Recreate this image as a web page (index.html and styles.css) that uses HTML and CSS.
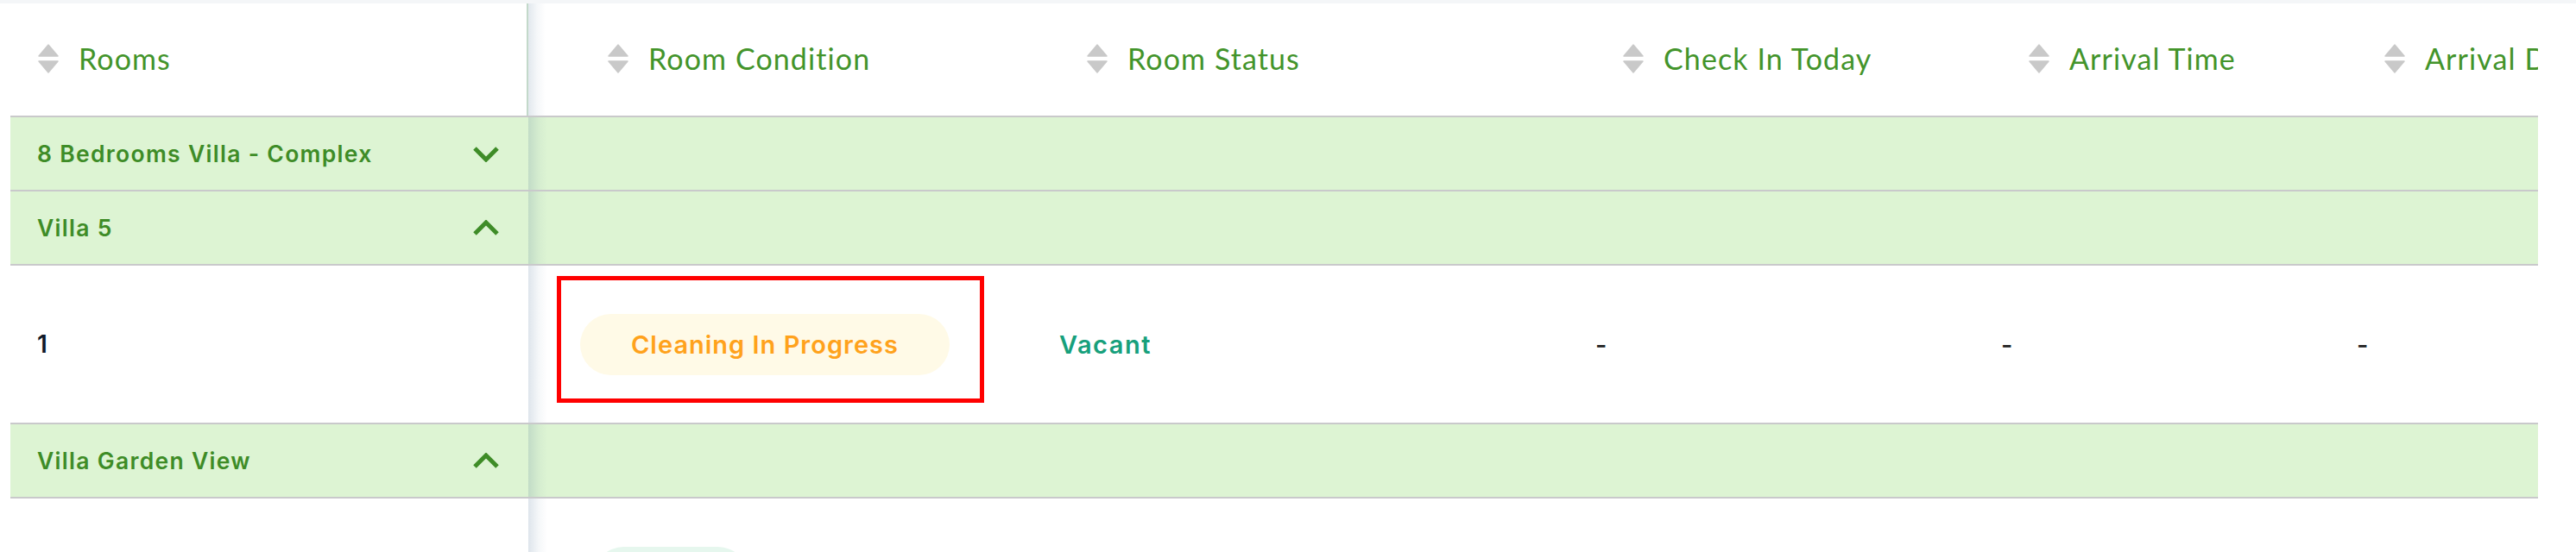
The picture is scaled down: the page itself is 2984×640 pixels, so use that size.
FILE: index.html
```html
<!DOCTYPE html>
<html lang="en">
<head>
<meta charset="utf-8">
<title>Rooms</title>
<link rel="stylesheet" href="styles.css">
</head>
<body>
<div class="topbar"></div>
<div class="table-wrap">
  <div class="table">
    <div class="row head">
      <div class="cell sticky th th-first">
        <svg class="sort" viewBox="0 0 24 34"><path d="M12 1 L23 14 L1 14 Z"/><path d="M1 20 L23 20 L12 33 Z"/></svg>
        <span>Rooms</span>
      </div>
      <div class="cell th th-cond">
        <svg class="sort" viewBox="0 0 24 34"><path d="M12 1 L23 14 L1 14 Z"/><path d="M1 20 L23 20 L12 33 Z"/></svg>
        <span>Room Condition</span>
      </div>
      <div class="cell th">
        <svg class="sort" viewBox="0 0 24 34"><path d="M12 1 L23 14 L1 14 Z"/><path d="M1 20 L23 20 L12 33 Z"/></svg>
        <span>Room Status</span>
      </div>
      <div class="cell th">
        <svg class="sort" viewBox="0 0 24 34"><path d="M12 1 L23 14 L1 14 Z"/><path d="M1 20 L23 20 L12 33 Z"/></svg>
        <span>Check In Today</span>
      </div>
      <div class="cell th">
        <svg class="sort" viewBox="0 0 24 34"><path d="M12 1 L23 14 L1 14 Z"/><path d="M1 20 L23 20 L12 33 Z"/></svg>
        <span>Arrival Time</span>
      </div>
      <div class="cell th">
        <svg class="sort" viewBox="0 0 24 34"><path d="M12 1 L23 14 L1 14 Z"/><path d="M1 20 L23 20 L12 33 Z"/></svg>
        <span>Arrival Date</span>
      </div>
    </div>

    <div class="row group">
      <div class="cell sticky gcell">
        <span class="gname">8 Bedrooms Villa - Complex</span>
        <svg class="chev" viewBox="0 0 32 19"><polyline points="3,3 16,16 29,3"/></svg>
      </div>
      <div class="gfill"></div>
    </div>

    <div class="row group">
      <div class="cell sticky gcell">
        <span class="gname">Villa 5</span>
        <svg class="chev" viewBox="0 0 32 19"><polyline points="3,16 16,3 29,16"/></svg>
      </div>
      <div class="gfill"></div>
    </div>

    <div class="row data">
      <div class="cell sticky td td-first"><span class="room-no">1</span></div>
      <div class="cell td td-cond">
        <span class="badge badge-cleaning">Cleaning In Progress</span>
        <div class="highlight"></div>
      </div>
      <div class="cell td"><span class="status-vacant">Vacant</span></div>
      <div class="cell td"><span class="dash">-</span></div>
      <div class="cell td"><span class="dash">-</span></div>
      <div class="cell td"><span class="dash">-</span></div>
    </div>

    <div class="row group">
      <div class="cell sticky gcell">
        <span class="gname">Villa Garden View</span>
        <svg class="chev" viewBox="0 0 32 19"><polyline points="3,16 16,3 29,16"/></svg>
      </div>
      <div class="gfill"></div>
    </div>

    <div class="row data">
      <div class="cell sticky td td-first"></div>
      <div class="cell td td-cond">
        <span class="badge badge-clean" aria-hidden="true"></span>
      </div>
      <div class="cell td"></div>
      <div class="cell td"></div>
      <div class="cell td"></div>
      <div class="cell td"></div>
    </div>
  </div>
</div>
</body>
</html>
```

FILE: styles.css
```css
html, body {
  margin: 0;
  padding: 0;
  background: #ffffff;
}

body {
  width: 2984px;
  height: 640px;
  overflow: hidden;
  font-family: "Inter", "Liberation Sans", sans-serif;
}

.topbar {
  height: 4px;
  background: #f4f6f8;
}

.table-wrap {
  margin-left: 12px;
  width: 2928px;
  overflow: hidden;
}

.table {
  width: 3086px;
}

.row {
  display: grid;
  grid-template-columns: 600px 583px 621px 470px 412px 400px;
  border-bottom: 2px solid #c9c9cb;
}

.cell {
  display: flex;
  align-items: center;
  box-sizing: border-box;
  min-width: 0;
  white-space: nowrap;
}

.sticky {
  position: relative;
  z-index: 2;
}

.sticky::after {
  content: "";
  position: absolute;
  top: 0;
  bottom: 0;
  right: -22px;
  width: 22px;
  background: linear-gradient(to right, rgba(60, 100, 140, 0.17), rgba(60, 100, 140, 0.05) 55%, rgba(60, 100, 140, 0));
  pointer-events: none;
}

/* header */
.head .cell {
  height: 130px;
  padding-bottom: 3px;
  background: #ffffff;
}

.th {
  gap: 23px;
  padding-left: 64px;
  font-family: "Lato", "Liberation Sans", sans-serif;
  font-size: 34px;
  letter-spacing: 1.1px;
  color: #43942b;
}

.th-first {
  padding-left: 32px;
  border-right: 2px solid #dcefd5;
}

.th-cond {
  padding-left: 92px;
}

.sort {
  width: 24px;
  height: 34px;
  flex: none;
  fill: #c9c9c9;
  stroke: #c9c9c9;
  stroke-width: 1.5;
  stroke-linejoin: round;
}

/* group rows */
.group {
  background: #ddf4d3;
}

.group .cell {
  height: 84px;
}

.gcell {
  justify-content: space-between;
  padding-left: 31px;
  padding-right: 33px;
  background: #ddf4d3;
}

.gname {
  font-size: 26.5px;
  font-weight: 600;
  letter-spacing: 1.3px;
  color: #3e8c27;
}

.chev {
  width: 32px;
  height: 19px;
  flex: none;
  fill: none;
  stroke: #3e8c27;
  stroke-width: 5;
  stroke-linecap: butt;
  stroke-linejoin: miter;
}

.gfill {
  grid-column: 2 / -1;
  height: 84px;
}

/* data rows */
.data .cell {
  height: 182px;
  background: #ffffff;
}

.td {
  padding-left: 32px;
}

.td-first {
  padding-left: 31px;
}

.td-cond {
  position: relative;
  padding-left: 60px;
}

.room-no {
  font-size: 28px;
  font-weight: 600;
  color: #111827;
}

.badge {
  display: inline-flex;
  align-items: center;
  height: 71px;
  border-radius: 36px;
  font-size: 29px;
  font-weight: 600;
  letter-spacing: 1px;
}

.badge-cleaning {
  padding: 0 59px;
  background: #fffae7;
  color: #ffa21c;
}

.badge-clean {
  width: 180px;
  margin-left: 15px;
  background: #e6f7ee;
}

.status-vacant {
  font-size: 29px;
  font-weight: 600;
  letter-spacing: 1.5px;
  color: #17a07c;
}

.dash {
  font-size: 29px;
  font-weight: 500;
  color: #222222;
}

.highlight {
  position: absolute;
  left: 33px;
  top: 12px;
  width: 495px;
  height: 147px;
  box-sizing: border-box;
  border: 5px solid #ff0000;
  pointer-events: none;
}
```
